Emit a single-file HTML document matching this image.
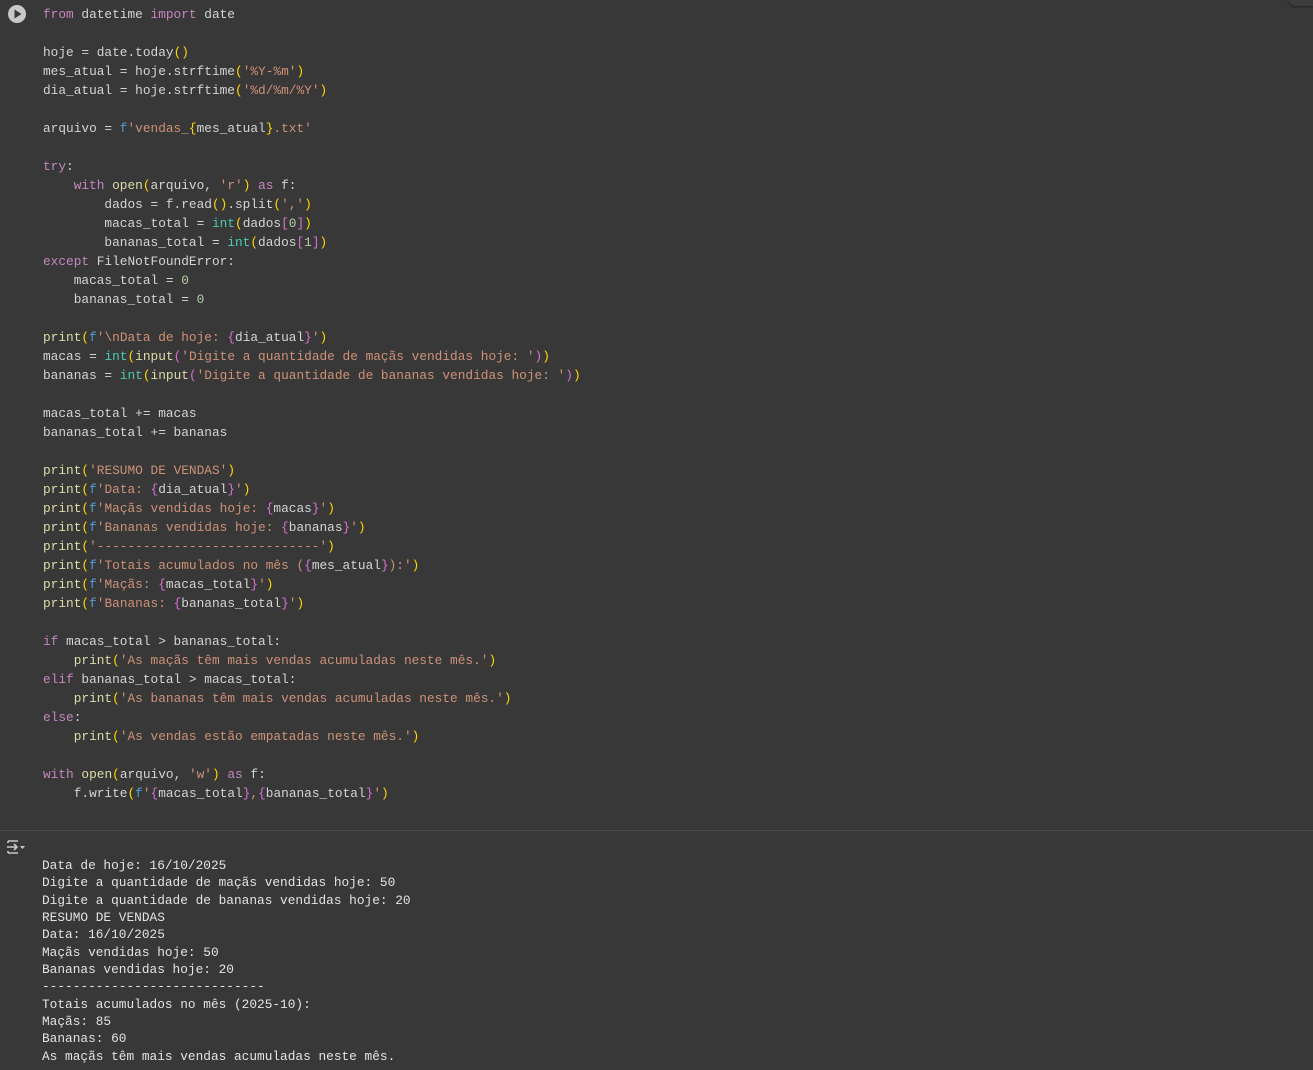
<!DOCTYPE html>
<html><head><meta charset="utf-8"><style>
body{margin:0;background:#383838;width:1313px;height:1070px;overflow:hidden;position:relative;font-family:"Liberation Mono",monospace}
pre{margin:0;position:absolute;font-family:"Liberation Mono",monospace;font-size:12.8px;white-space:pre}
#code{left:43px;top:5px;line-height:19px;color:#d4d4d4}
#out{left:42px;top:857px;line-height:17.35px;color:#e3e3e3}
.k{color:#c586c0}.s{color:#ce9178}.n{color:#b5cea8}.y{color:#ffd700}.p{color:#da70d6}.b{color:#179fff}.fn{color:#dcdcaa}.t{color:#4ec9b0}.f{color:#569cd6}
.div{position:absolute;left:0;right:0;top:830px;height:1px;background:#4a4a4a}
.corner{position:absolute;right:0;top:-10px;width:25px;height:16px;border-radius:0 0 0 8px;background:#3c3c3c;box-shadow:0 1px 2px rgba(0,0,0,.4)}
</style></head><body>
<svg style="position:absolute;left:7px;top:4px" width="20" height="20" viewBox="0 0 20 20"><circle cx="10" cy="10" r="9" fill="#c8c8c8"/><path d="M7.5 5.5 L14.5 10 L7.5 14.5Z" fill="#383838"/></svg>
<div class="corner"></div>
<pre id="code"><span class="k">from</span> datetime <span class="k">import</span> date

hoje = date.today<span class="y">()</span>
mes_atual = hoje.strftime<span class="y">(</span><span class="s">'%Y-%m'</span><span class="y">)</span>
dia_atual = hoje.strftime<span class="y">(</span><span class="s">'%d/%m/%Y'</span><span class="y">)</span>

arquivo = <span class="f">f</span><span class="s">'vendas_</span><span class="y">{</span>mes_atual<span class="y">}</span><span class="s">.txt'</span>

<span class="k">try</span>:
    <span class="k">with</span> <span class="fn">open</span><span class="y">(</span>arquivo, <span class="s">'r'</span><span class="y">)</span> <span class="k">as</span> f:
        dados = f.read<span class="y">()</span>.split<span class="y">(</span><span class="s">','</span><span class="y">)</span>
        macas_total = <span class="t">int</span><span class="y">(</span>dados<span class="p">[</span><span class="n">0</span><span class="p">]</span><span class="y">)</span>
        bananas_total = <span class="t">int</span><span class="y">(</span>dados<span class="p">[</span><span class="n">1</span><span class="p">]</span><span class="y">)</span>
<span class="k">except</span> FileNotFoundError:
    macas_total = <span class="n">0</span>
    bananas_total = <span class="n">0</span>

<span class="fn">print</span><span class="y">(</span><span class="f">f</span><span class="s">'\nData de hoje: </span><span class="p">{</span>dia_atual<span class="p">}</span><span class="s">'</span><span class="y">)</span>
macas = <span class="t">int</span><span class="y">(</span><span class="fn">input</span><span class="p">(</span><span class="s">'Digite a quantidade de maçãs vendidas hoje: '</span><span class="p">)</span><span class="y">)</span>
bananas = <span class="t">int</span><span class="y">(</span><span class="fn">input</span><span class="p">(</span><span class="s">'Digite a quantidade de bananas vendidas hoje: '</span><span class="p">)</span><span class="y">)</span>

macas_total += macas
bananas_total += bananas

<span class="fn">print</span><span class="y">(</span><span class="s">'RESUMO DE VENDAS'</span><span class="y">)</span>
<span class="fn">print</span><span class="y">(</span><span class="f">f</span><span class="s">'Data: </span><span class="p">{</span>dia_atual<span class="p">}</span><span class="s">'</span><span class="y">)</span>
<span class="fn">print</span><span class="y">(</span><span class="f">f</span><span class="s">'Maçãs vendidas hoje: </span><span class="p">{</span>macas<span class="p">}</span><span class="s">'</span><span class="y">)</span>
<span class="fn">print</span><span class="y">(</span><span class="f">f</span><span class="s">'Bananas vendidas hoje: </span><span class="p">{</span>bananas<span class="p">}</span><span class="s">'</span><span class="y">)</span>
<span class="fn">print</span><span class="y">(</span><span class="s">'-----------------------------'</span><span class="y">)</span>
<span class="fn">print</span><span class="y">(</span><span class="f">f</span><span class="s">'Totais acumulados no mês (</span><span class="p">{</span>mes_atual<span class="p">}</span><span class="s">):'</span><span class="y">)</span>
<span class="fn">print</span><span class="y">(</span><span class="f">f</span><span class="s">'Maçãs: </span><span class="p">{</span>macas_total<span class="p">}</span><span class="s">'</span><span class="y">)</span>
<span class="fn">print</span><span class="y">(</span><span class="f">f</span><span class="s">'Bananas: </span><span class="p">{</span>bananas_total<span class="p">}</span><span class="s">'</span><span class="y">)</span>

<span class="k">if</span> macas_total &gt; bananas_total:
    <span class="fn">print</span><span class="y">(</span><span class="s">'As maçãs têm mais vendas acumuladas neste mês.'</span><span class="y">)</span>
<span class="k">elif</span> bananas_total &gt; macas_total:
    <span class="fn">print</span><span class="y">(</span><span class="s">'As bananas têm mais vendas acumuladas neste mês.'</span><span class="y">)</span>
<span class="k">else</span>:
    <span class="fn">print</span><span class="y">(</span><span class="s">'As vendas estão empatadas neste mês.'</span><span class="y">)</span>

<span class="k">with</span> <span class="fn">open</span><span class="y">(</span>arquivo, <span class="s">'w'</span><span class="y">)</span> <span class="k">as</span> f:
    f.write<span class="y">(</span><span class="f">f</span><span class="s">'</span><span class="p">{</span>macas_total<span class="p">}</span><span class="s">,</span><span class="p">{</span>bananas_total<span class="p">}</span><span class="s">'</span><span class="y">)</span></pre>
<div class="div"></div>
<svg style="position:absolute;left:6px;top:838px" width="22" height="18" viewBox="0 0 22 18" fill="none" stroke="#c8c8c8" stroke-width="1.6"><path d="M2 3h10M2 15h10M2 3v2M2 15v-2M1 9h10M8 6l3 3-3 3"/><path d="M14 8h5l-2.5 3z" fill="#c8c8c8" stroke="none"/></svg>
<pre id="out">Data de hoje: 16/10/2025
Digite a quantidade de maçãs vendidas hoje: 50
Digite a quantidade de bananas vendidas hoje: 20
RESUMO DE VENDAS
Data: 16/10/2025
Maçãs vendidas hoje: 50
Bananas vendidas hoje: 20
-----------------------------
Totais acumulados no mês (2025-10):
Maçãs: 85
Bananas: 60
As maçãs têm mais vendas acumuladas neste mês.</pre>
</body></html>
